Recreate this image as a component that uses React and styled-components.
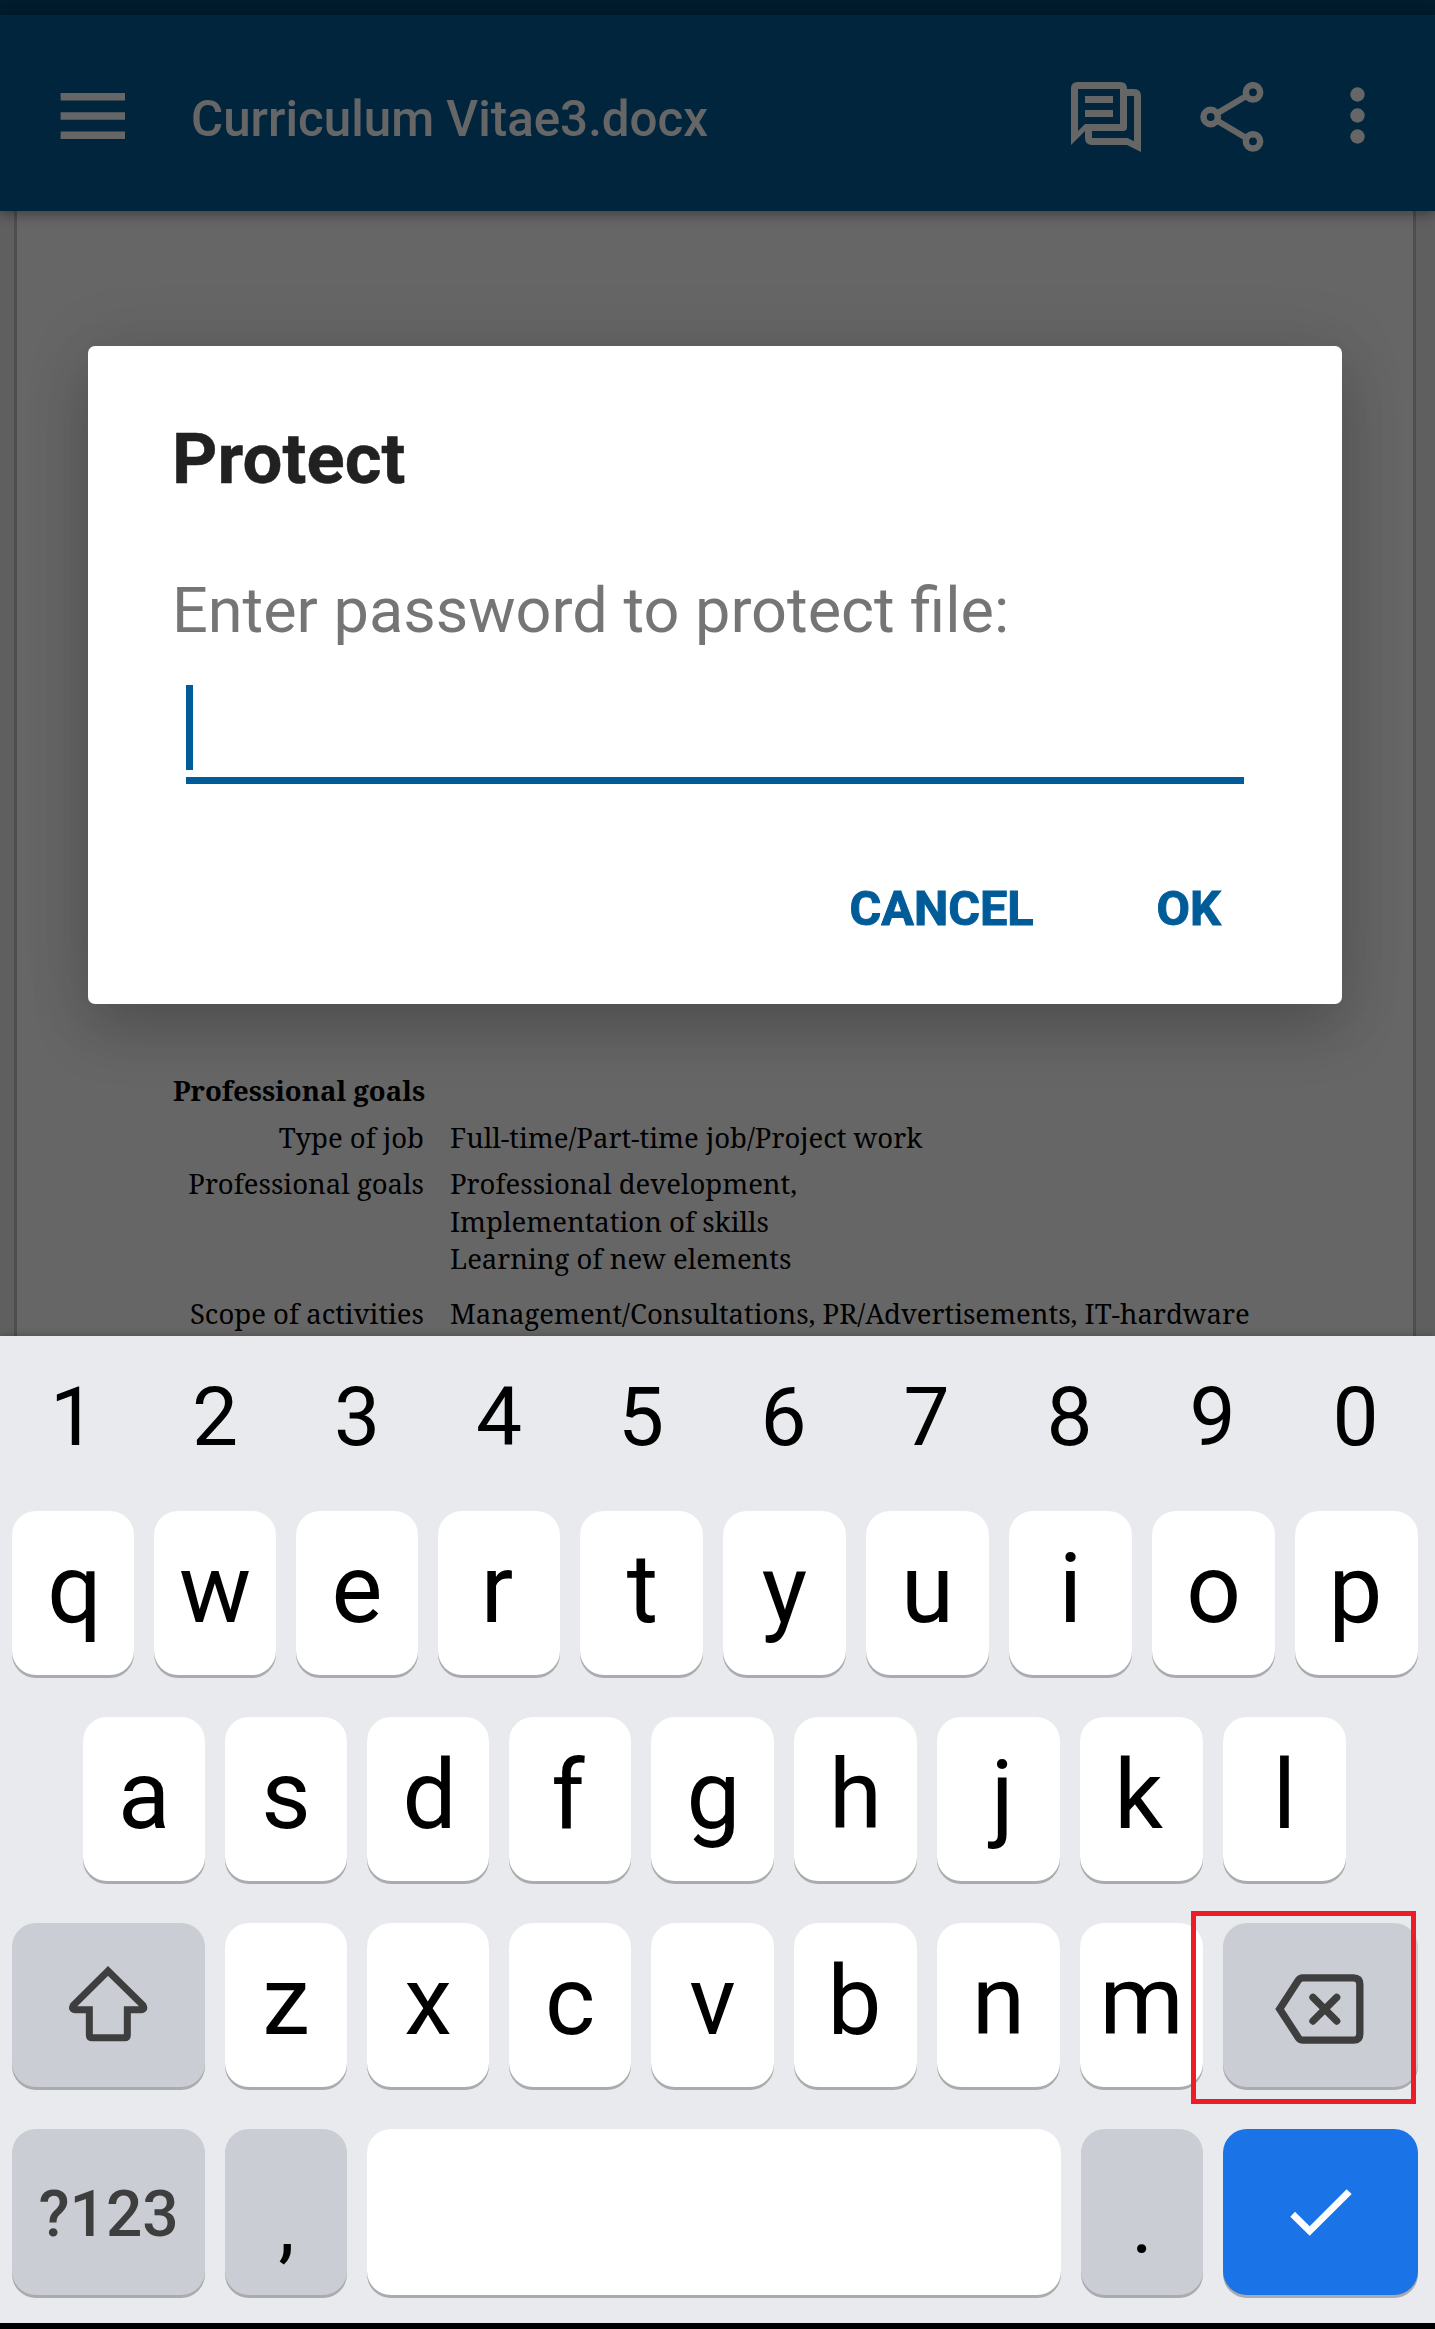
import React from 'react'
import styled, { createGlobalStyle, css } from 'styled-components'

const GlobalStyle = createGlobalStyle`
  body {
    margin: 0;
    background: #000000;
  }

  * {
    box-sizing: border-box;
  }
`

const Screen = styled.div`
  position: relative;
  display: flex;
  flex-direction: column;
  width: 1435px;
  height: 2329px;
  overflow: hidden;
  background: #000000;
  font-family: Roboto, 'Liberation Sans', sans-serif;
`

const Editor = styled.div`
  position: relative;
  display: flex;
  flex-direction: column;
  height: 1336px;
  flex-shrink: 0;
  overflow: hidden;
`

const StatusBar = styled.div`
  height: 15px;
  flex-shrink: 0;
  background: #004670;
`

const Toolbar = styled.header`
  position: relative;
  display: flex;
  align-items: center;
  height: 196px;
  flex-shrink: 0;
  padding: 5px 70px 0 60px;
  background: #005c99;
  color: #ffffff;
  box-shadow: 0 4px 12px rgba(0, 0, 0, 0.35);

  svg {
    display: block;
    flex-shrink: 0;
  }
`

const FileName = styled.h1`
  margin: 0;
  padding: 7px 0 0 66px;
  flex-grow: 1;
  font-size: 49.3px;
  font-weight: 500;
  line-height: 60px;
`

const ToolbarActions = styled.div`
  display: flex;
  align-items: center;
  gap: 59px;
  padding-top: 3px;
`

const MoreSlot = styled.div`
  margin-left: 86px;
`

const Viewer = styled.main`
  display: flex;
  flex-grow: 1;
  padding: 0 19px 0 14px;
  background: #eeeeee;
`

const Page = styled.article`
  flex-grow: 1;
  padding: 861px 0 0 156px;
  border: solid #c4c4c4;
  border-width: 0 3px;
  background: #ffffff;
  color: #000000;
  font-family: 'Noto Serif', 'DejaVu Serif Condensed', 'DejaVu Serif', serif;
  font-size: 27.5px;
  line-height: 37.5px;
`

const PageHeading = styled.h2`
  width: 250px;
  margin: 0;
  padding-bottom: 9px;
  font-size: inherit;
  text-align: right;
  white-space: nowrap;
`

const Field = styled.div`
  display: grid;
  grid-template-columns: 251px 1fr;
  column-gap: 26px;
  padding-bottom: ${({ $gap }) => $gap || 0}px;
`

const FieldLabel = styled.div`
  text-align: right;
  white-space: nowrap;
`

const FieldValue = styled.div`
  white-space: pre;
`

const Scrim = styled.div`
  position: absolute;
  inset: 0;
  padding: 346px 93px 0 88px;
  background: rgba(0, 0, 0, 0.6);
`

const Dialog = styled.section`
  display: flex;
  flex-direction: column;
  height: 658px;
  padding: 72px 98px 0 84px;
  border-radius: 7px;
  background: #ffffff;
  box-shadow: 0 0 70px rgba(0, 0, 0, 0.1), 0 28px 56px rgba(0, 0, 0, 0.17);
`

const DialogTitle = styled.h2`
  margin: 0;
  color: #212121;
  font-size: 70.6px;
  font-weight: 700;
  line-height: 82px;
  letter-spacing: 0.1px;
  -webkit-text-stroke: 0.5px #212121;
`

const DialogText = styled.p`
  margin: 74px 0 0;
  color: #757575;
  font-size: 63px;
  line-height: 74px;
  white-space: nowrap;
`

const PasswordField = styled.div`
  height: 99px;
  margin: 37px 0 0 14px;
  border-bottom: 7px solid #005c99;
`

const Caret = styled.div`
  width: 7px;
  height: 85px;
  background: #005c99;
`

const DialogActions = styled.div`
  display: flex;
  justify-content: flex-end;
  gap: 123px;
  padding: 95px 23px 0 0;
`

const DialogButton = styled.button`
  padding: 0;
  border: 0;
  background: none;
  color: #005c99;
  font-family: inherit;
  font-size: 48.6px;
  font-weight: 700;
  line-height: 60px;
  -webkit-text-stroke: 1px #005c99;
`

const Keyboard = styled.div`
  position: relative;
  height: 987px;
  flex-shrink: 0;
  background: #e8eaed;
  box-shadow: 0 0 8px rgba(0, 0, 0, 0.25);
`

const KeyRow = styled.div`
  display: grid;
  grid-template-columns: ${({ $columns }) => $columns};
  column-gap: 20px;
  padding-left: ${({ $indent }) => $indent || 12}px;
  margin-bottom: 42px;
`

const NumberRow = styled(KeyRow)`
  height: 175px;
  margin-bottom: 0;
`

const NumberKey = styled.div`
  font-size: 82px;
  line-height: 162px;
  text-align: center;
`

const tones = {
  light: '#ffffff',
  grey: '#cbcdd5',
  accent: '#1b73e8'
}

const Key = styled.div`
  position: relative;
  display: flex;
  justify-content: center;
  align-items: flex-start;
  height: ${({ $tall }) => ($tall ? 166 : 164)}px;
  padding-left: ${({ $nudge = 0 }) => Math.max($nudge * 2, 0)}px;
  padding-right: ${({ $nudge = 0 }) => Math.max($nudge * -2, 0)}px;
  border-radius: 24px;
  background: ${({ $tone }) => tones[$tone || 'light']};
  box-shadow: 0 3px 0 #a9abae;
  color: #000000;
  font-size: 96px;
  line-height: 156px;

  ${({ $icon }) =>
    $icon &&
    css`
      align-items: center;
      color: #3e3e3f;

      svg {
        display: block;
      }
    `}
`

const PunctuationKey = styled(Key)`
  font-size: 82px;
  line-height: 192px;
`

const SymbolsKey = styled(Key)`
  color: #3e3e3f;
  font-size: 64px;
  font-weight: 500;
  line-height: 172px;
`

// Frame drawn over the backspace key and its neighbour
const Highlight = styled.div`
  position: absolute;
  top: -12px;
  left: -32px;
  width: 225px;
  height: 193px;
  border: 5px solid #ee1c24;
`

const ShiftBox = styled.div`
  margin: -3px 2px 0 0;
`

const BackspaceBox = styled.div`
  margin: 8px 3px 0 0;
`

const MenuIcon = () => (
  <svg width="65" height="46" viewBox="0 0 65 46" fill="currentColor">
    <path d="M.6 0h64.4v7.5H.6zM.6 19.2h64.4v7.5H.6zM.6 38.4h64.4v7.5H.6z" />
  </svg>
)

const CommentsIcon = () => (
  <svg width="70" height="70" viewBox="0 0 210 210">
    <path
      fill="currentColor"
      fillRule="evenodd"
      d="M20 0H148Q168 0 168 21H189Q210 21 210 42V210L168 189H63Q42 189 42 168V147L0 189V20Q0 0 20 0ZM21 21V147L42 126H147V21ZM168 42V136Q168 147 157 147H63V168H170L189 178V42Z"
    />
    <path fill="currentColor" d="M42 42h84v21H42zM42 84h84v21H42z" />
  </svg>
)

const ShareIcon = () => (
  <svg width="64" height="70" viewBox="0 0 192 210" fill="none" stroke="currentColor">
    <path d="M50 95L137 43M50 115L137 167" strokeWidth="18" />
    <g strokeWidth="19.5">
      <circle cx="159" cy="31" r="21.5" />
      <circle cx="32" cy="105" r="21.5" />
      <circle cx="159" cy="178" r="21.5" />
    </g>
  </svg>
)

const MoreIcon = () => (
  <svg width="15" height="58" viewBox="0 0 15 58" fill="currentColor">
    <circle cx="7.5" cy="7.5" r="7.2" />
    <circle cx="7.5" cy="28.5" r="7.2" />
    <circle cx="7.5" cy="49.5" r="7.2" />
  </svg>
)

const ShiftIcon = () => (
  <svg width="80" height="76" viewBox="204 200 240 228" fill="none" stroke="currentColor">
    <path
      strokeWidth="21"
      d="M324 215L220 318Q213 331 226 331H268V407Q268 415.5 277 415.5H373Q382 415.5 382 407V331H423Q436 331 429 318Z"
    />
  </svg>
)

const BackspaceIcon = () => (
  <svg width="89" height="70" viewBox="614 281 267 210" fill="none" stroke="currentColor">
    <path
      strokeWidth="22"
      d="M628 386L684 300Q689 292.5 698 292.5H849Q868.5 292.5 868.5 312V460Q868.5 479.5 849 479.5H698Q689 479.5 684 472Z"
    />
    <path strokeWidth="22" strokeLinecap="round" d="M728 351L799 422M799 351L728 422" />
  </svg>
)

const CheckIcon = () => (
  <svg width="62" height="47" viewBox="660 928 186 141" fill="#ffffff">
    <path d="M661 1011L675 996L719 1040L830 929L845 943L719 1068Z" />
  </svg>
)

// Optical centring: letters with uneven side bearings are shifted on their keys
const nudges = { q: 1.5, r: -2, t: 1, p: -1, d: 1.5, f: -2, g: 1, j: 4, k: -3, b: -1 }

const LetterKeys = ({ letters }) =>
  [...letters].map((letter) => (
    <Key key={letter} $nudge={nudges[letter]}>
      {letter}
    </Key>
  ))

const App = () => (
  <Screen>
    <GlobalStyle />

    <Editor>
      <StatusBar />
      <Toolbar>
        <MenuIcon />
        <FileName>Curriculum Vitae3.docx</FileName>
        <ToolbarActions>
          <CommentsIcon />
          <ShareIcon />
        </ToolbarActions>
        <MoreSlot>
          <MoreIcon />
        </MoreSlot>
      </Toolbar>

      <Viewer>
        <Page>
          <PageHeading>Professional goals</PageHeading>
          <Field $gap={9}>
            <FieldLabel>Type of job</FieldLabel>
            <FieldValue>Full-time/Part-time job/Project work</FieldValue>
          </Field>
          <Field $gap={17}>
            <FieldLabel>Professional goals</FieldLabel>
            <FieldValue>{'Professional development,\nImplementation of skills\nLearning of new elements'}</FieldValue>
          </Field>
          <Field>
            <FieldLabel>Scope of activities</FieldLabel>
            <FieldValue>Management/Consultations, PR/Advertisements, IT-hardware</FieldValue>
          </Field>
        </Page>
      </Viewer>

      <Scrim>
        <Dialog>
          <DialogTitle>Protect</DialogTitle>
          <DialogText>Enter password to protect file:</DialogText>
          <PasswordField>
            <Caret />
          </PasswordField>
          <DialogActions>
            <DialogButton>CANCEL</DialogButton>
            <DialogButton>OK</DialogButton>
          </DialogActions>
        </Dialog>
      </Scrim>
    </Editor>

    <Keyboard>
      <NumberRow $columns="repeat(5, 122px) repeat(5, 123px)">
        {[...'1234567890'].map((digit) => (
          <NumberKey key={digit}>{digit}</NumberKey>
        ))}
      </NumberRow>

      <KeyRow $columns="repeat(4, 122px) repeat(6, 123px)">
        <LetterKeys letters="qwertyuiop" />
      </KeyRow>

      <KeyRow $columns="repeat(4, 122px) repeat(5, 123px)" $indent={83}>
        <LetterKeys letters="asdfghjkl" />
      </KeyRow>

      <KeyRow $columns="193px repeat(3, 122px) repeat(4, 123px) 195px">
        <Key $tone="grey" $icon>
          <ShiftBox>
            <ShiftIcon />
          </ShiftBox>
        </Key>
        <LetterKeys letters="zxcvbnm" />
        <Key $tone="grey" $icon>
          <BackspaceBox>
            <BackspaceIcon />
          </BackspaceBox>
          <Highlight />
        </Key>
      </KeyRow>

      <KeyRow $columns="193px 122px 694px 122px 195px">
        <SymbolsKey $tone="grey" $tall>
          ?123
        </SymbolsKey>
        <PunctuationKey $tone="grey" $tall $nudge={0.5}>
          ,
        </PunctuationKey>
        <Key $tall />
        <PunctuationKey $tone="grey" $tall>
          .
        </PunctuationKey>
        <Key $tone="accent" $icon $tall>
          <CheckIcon />
        </Key>
      </KeyRow>
    </Keyboard>
  </Screen>
)

export default App
